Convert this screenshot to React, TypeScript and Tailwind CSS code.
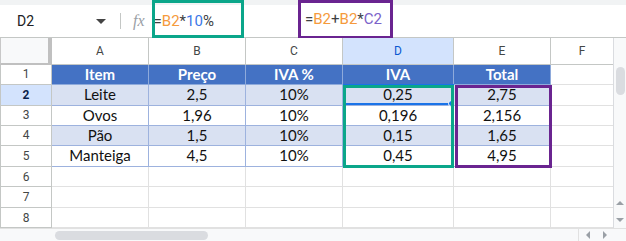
import React from "react";

const cols = [
  { key: "A", w: "w-[97px]" },
  { key: "B", w: "w-[97px]" },
  { key: "C", w: "w-[97px]" },
  { key: "D", w: "w-[111px]" },
  { key: "E", w: "w-[97px]" },
];

const rows: string[][] = [
  ["Item", "Preço", "IVA %", "IVA", "Total"],
  ["Leite", "2,5", "10%", "0,25", "2,75"],
  ["Ovos", "1,96", "10%", "0,196", "2,156"],
  ["Pão", "1,5", "10%", "0,15", "1,65"],
  ["Manteiga", "4,5", "10%", "0,45", "4,95"],
];

const rowHeights = ["h-[20px]", "h-[21px]", "h-[20px]", "h-[20px]", "h-[21px]", "h-[21px]", "h-[21px]", "h-[20px]"];

const cellFont = { fontFamily: "Lato, 'Open Sans', sans-serif" };

function FormulaBar() {
  return (
    <div className="relative h-[38px]">
      <div className="h-[5px] bg-[#f1f3f4]" />
      <div className="flex items-center h-[33px] bg-white border-b border-[#c4c7c5]">
        <div className="w-[120px] flex items-center pl-[17px] pr-[14px]">
          <span className="text-[14px] text-[#202124]">D2</span>
          <span className="ml-auto w-0 h-0 border-l-[5px] border-r-[5px] border-t-[5px] border-l-transparent border-r-transparent border-t-[#444]" />
        </div>
        <div className="w-px h-[16px] bg-[#c4c7c5]" />
        <span
          className="ml-[12px] text-[16px] italic text-[#9aa0a6]"
          style={{ fontFamily: "'Liberation Serif', serif" }}
        >
          fx
        </span>
        <span className="ml-[9px] text-[15px] text-[#3c4043]">
          =<span className="text-[#f59a3c]">B2</span>*<span className="text-[#3b78e7]">10</span>%
        </span>
      </div>

      {/* annotation boxes */}
      <div className="absolute left-[152px] top-0 w-[92px] h-[38px] border-[3px] border-[#0ba68a]" />
      <div className="absolute left-[298px] top-0 w-[95px] h-[39px] border-[3px] border-[#6a2490] bg-white flex items-center pl-[4px]">
        <span className="text-[15px] text-[#3c4043]">
          =<span className="text-[#f59a3c]">B2</span>+<span className="text-[#f59a3c]">B2</span>*
          <span className="text-[#7b62c9]">C2</span>
        </span>
      </div>
    </div>
  );
}

function Grid() {
  return (
    <div className="relative flex h-[190px]">
      <div className="w-[613px] flex flex-col">
        {/* column headers */}
        <div className="flex h-[27px]">
          <div className="w-[52px] bg-[#f8f9fa] border-r-4 border-b-[2px] border-[#c0c0c0] border-l border-l-[#c8c8c8]" />
          {cols.map((c) => (
            <div
              key={c.key}
              className={`${c.w} flex items-center justify-center text-[12px] border-r border-b border-[#c4c7c5] ${
                c.key === "D" ? "bg-[#d3e3fd] text-[#0b57d0]" : "bg-white text-[#444746]"
              }`}
            >
              {c.key}
            </div>
          ))}
          <div className="w-[62px] flex items-center justify-center text-[12px] text-[#444746] border-b border-[#c4c7c5] bg-white">
            F
          </div>
        </div>

        {rowHeights.map((h, i) => {
          const data = rows[i];
          const header = i === 0;
          const band = i === 1 || i === 3;
          return (
            <div key={i} className={`flex ${h}`}>
              <div
                className={`w-[52px] flex items-center justify-center text-[12px] border-r border-b border-l border-[#c4c7c5] ${
                  i === 1 ? "bg-[#d3e3fd] text-[#0b1f4a] font-bold" : "bg-white text-[#444746]"
                }`}
              >
                {i + 1}
              </div>
              {cols.map((c, j) => {
                if (!data) {
                  return <div key={c.key} className={`${c.w} border-r border-b border-[#e1e1e1] bg-white`} />;
                }
                return (
                  <div
                    key={c.key}
                    style={cellFont}
                    className={`${c.w} flex items-center justify-center text-[15px] border-r border-b ${
                      header
                        ? "bg-[#4472c4] text-white font-bold border-[#8eaadb]"
                        : band
                        ? "bg-[#d9e1f2] text-[#111] border-[#9db2de]"
                        : "bg-white text-[#111] border-[#9db2de]"
                    }`}
                  >
                    {data[j]}
                  </div>
                );
              })}
              <div className="w-[62px] border-b border-[#e1e1e1] bg-white" />
            </div>
          );
        })}
      </div>

      {/* vertical scrollbar */}
      <div className="w-[13px] bg-[#f8f9fa] border-l border-[#dadce0] flex flex-col items-center pt-[29px]">
        <div className="w-[9px] h-[28px] rounded-full bg-[#dadce0]" />
        <div className="mt-auto mb-[6px] flex flex-col items-center gap-[13px]">
          <span className="w-0 h-0 border-l-[4px] border-r-[4px] border-b-[4px] border-l-transparent border-r-transparent border-b-[#9aa0a6]" />
          <span className="w-0 h-0 border-l-[4px] border-r-[4px] border-t-[4px] border-l-transparent border-r-transparent border-t-[#9aa0a6]" />
        </div>
      </div>

      {/* selection D2 */}
      <div className="absolute left-[343px] top-[46px] w-[111px] h-[21px] border-2 border-[#1a73e8]" />
      <div className="absolute left-[448px] top-[62px] w-[7px] h-[7px] rounded-full bg-[#1a73e8] border border-white" />

      {/* annotation boxes */}
      <div className="absolute left-[343px] top-[47px] w-[111px] h-[83px] border-[3px] border-[#0ba68a]" />
      <div className="absolute left-[455px] top-[47px] w-[97px] h-[83px] border-[3px] border-[#6a2490]" />
    </div>
  );
}

function BottomBar() {
  return (
    <div className="flex h-[13px] bg-[#f8f9fa] border-t border-[#e1e1e1]">
      <div className="w-[53px]" />
      <div className="w-[525px] flex items-center pl-[2px]">
        <div className="w-[153px] h-[9px] rounded-full bg-[#dadce0]" />
      </div>
      <div className="w-[18px] flex items-center justify-center border-l border-[#e1e1e1]">
        <span className="w-0 h-0 border-t-[4px] border-b-[4px] border-r-[4px] border-t-transparent border-b-transparent border-r-[#9aa0a6]" />
      </div>
      <div className="w-[17px] flex items-center justify-center">
        <span className="w-0 h-0 border-t-[4px] border-b-[4px] border-l-[4px] border-t-transparent border-b-transparent border-l-[#9aa0a6]" />
      </div>
      <div className="w-[13px]" />
    </div>
  );
}

export default function App() {
  return (
    <div
      className="w-[626px] h-[241px] overflow-hidden bg-white"
      style={{ fontFamily: "Roboto, 'Liberation Sans', sans-serif" }}
    >
      <FormulaBar />
      <Grid />
      <BottomBar />
    </div>
  );
}
